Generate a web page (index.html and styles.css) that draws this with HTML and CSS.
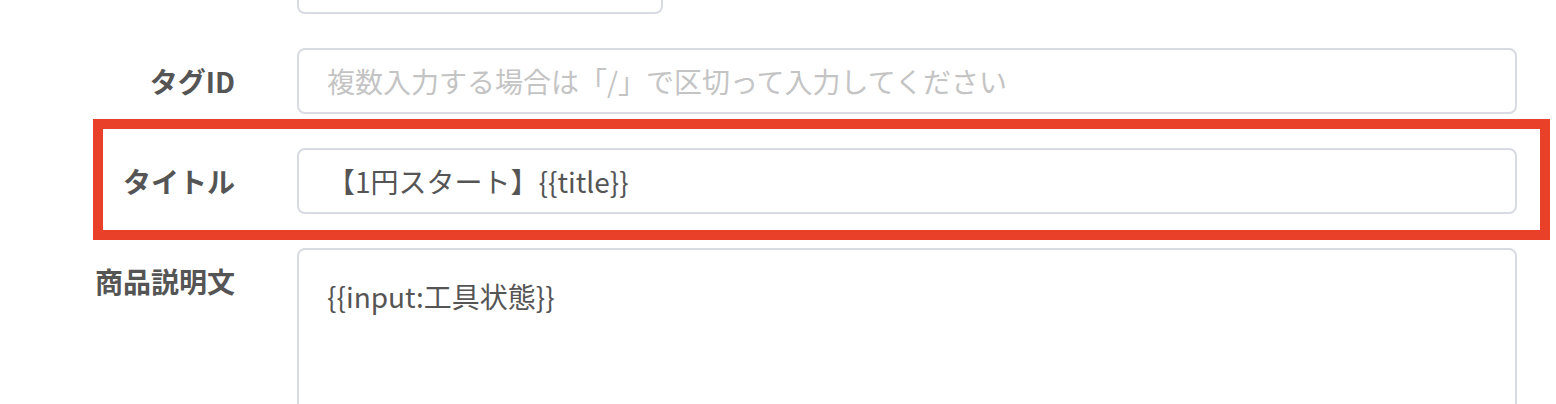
FILE: index.html
```html
<!DOCTYPE html>
<html lang="ja">
<head>
    <meta charset="UTF-8">
    <meta name="viewport" content="width=device-width, initial-scale=1.0">
    <title>出品テンプレート</title>
    <link rel="stylesheet" href="styles.css">
</head>
<body>
    <form class="form">
        <div class="row">
            <label class="label" for="category"></label>
            <input type="text" id="category" class="field field-short" />
        </div>
        <div class="row">
            <label class="label" for="tag-id">タグID</label>
            <input type="text" id="tag-id" class="field" placeholder="複数入力する場合は「/」で区切って入力してください" />
        </div>
        <div class="row row-marked">
            <label class="label" for="title">タイトル</label>
            <input type="text" id="title" class="field" value="【1円スタート】{{title}}" />
        </div>
        <div class="row">
            <label class="label" for="description">商品説明文</label>
            <textarea id="description" class="field field-area">{{input:工具状態}}</textarea>
        </div>
    </form>
</body>
</html>
```

FILE: styles.css
```css
body {
    font-family: "Noto Sans CJK JP", "Noto Sans", sans-serif;
    background-color: #fff;
    margin: 0;
    padding: 0;
    overflow: hidden;
}
.form {
    margin-top: -52px;
    padding-right: 39px;
    display: flex;
    flex-direction: column;
    gap: 34px;
}
.row {
    display: grid;
    grid-template-columns: 235px 1fr;
    column-gap: 62px;
    align-items: start;
    position: relative;
}
.label {
    font-size: 28px;
    font-weight: bold;
    color: #555;
    line-height: 66px;
    text-align: right;
}
.field {
    box-sizing: border-box;
    height: 66px;
    width: 100%;
    padding: 0 28px;
    border: 2px solid #d9dbe3;
    border-radius: 8px;
    font-family: inherit;
    font-size: 28px;
    color: #555;
    background: #fff;
    outline: none;
}
.field::placeholder {
    color: #c4c4c4;
}
.field-short {
    width: 366px;
}
.field-area {
    height: 220px;
    padding-top: 26px;
    line-height: 40px;
    resize: none;
}
/* annotation frame drawn over the title row */
.row-marked::after {
    content: "";
    position: absolute;
    top: -29px;
    bottom: -26px;
    left: 93px;
    right: -33px;
    border: 10px solid #e9402a;
    pointer-events: none;
}
```
